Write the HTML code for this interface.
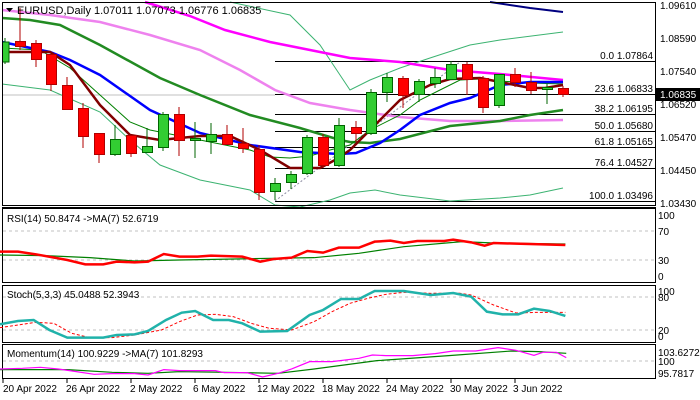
<!DOCTYPE html>
<html><head><meta charset="utf-8"><style>
html,body{margin:0;padding:0;background:#fff;width:700px;height:400px;overflow:hidden}
svg{display:block;font-family:"Liberation Sans",sans-serif;font-size:10px}
</style></head><body>
<svg width="700" height="400" viewBox="0 0 700 400" xmlns="http://www.w3.org/2000/svg">
<rect width="700" height="400" fill="#fff"/>
<!-- main panel -->
<line x1="2" y1="95" x2="275" y2="95" stroke="#c0c0c0" stroke-width="1"/>
<g stroke="#000" stroke-width="1">
<line x1="275" y1="61.5" x2="655" y2="61.5"/>
<line x1="275" y1="94.5" x2="655" y2="94.5"/>
<line x1="275" y1="114.5" x2="655" y2="114.5"/>
<line x1="275" y1="131.5" x2="655" y2="131.5"/>
<line x1="275" y1="147.5" x2="655" y2="147.5"/>
<line x1="275" y1="168.5" x2="655" y2="168.5"/>
<line x1="275" y1="201.5" x2="655" y2="201.5"/>
</g>
<g font-size="10" fill="#000" text-anchor="end">
<text x="653" y="59">0.0 1.07864</text>
<text x="653" y="92">23.6 1.06833</text>
<text x="653" y="112">38.2 1.06195</text>
<text x="653" y="129">50.0 1.05680</text>
<text x="653" y="145">61.8 1.05165</text>
<text x="653" y="166">76.4 1.04527</text>
<text x="653" y="199">100.0 1.03496</text>
</g>
<polyline fill="none" stroke="#8a8aa0" stroke-width="1" stroke-dasharray="2,2" points="275,201 460,62"/>
<!-- bollinger -->
<polyline fill="none" stroke="#3cb371" stroke-width="1" points="230,2 290,15 320,45 340,75 350,90 370,80 400,68 430,58 470,45 500,40 563,32"/>
<polyline fill="none" stroke="#3cb371" stroke-width="1" points="2,84 50,90 100,112 130,140 160,165 200,180 250,190 275,205 300,207 330,200 350,193 375,190 400,195 450,201 500,198 530,195 563,188"/>
<!-- MAs -->
<polyline fill="none" stroke="#000080" stroke-width="2" points="490,2 530,8 563,12"/>
<polyline fill="none" stroke="#ee82ee" stroke-width="2.5" points="2,10 50,15 100,22 150,35 200,50 240,70 275,90 310,103 350,110 400,117 450,121 500,121 563,120"/>
<polyline fill="none" stroke="#ff00ff" stroke-width="2.5" points="145,2 190,16 225,30 270,42 310,50 350,58 400,62 450,70 500,74 563,80"/>
<polyline fill="none" stroke="#228b22" stroke-width="2.5" points="2,18 30,20 60,25 100,45 160,78 200,95 250,115 300,128 340,140 350,142 370,143 400,139 450,126 500,121 530,115 563,110"/>
<polyline fill="none" stroke="#008000" stroke-width="1" points="2,48 40,50 70,68 100,95 130,122 150,130 200,140 250,150 270,157 290,158 310,156 330,150 350,145 370,130 400,115 420,100 440,90 460,80 480,79 500,81 530,83 563,84"/>
<polyline fill="none" stroke="#0000ff" stroke-width="2.5" points="2,42 50,52 70,60 100,75 150,110 200,133 250,145 300,152 340,154 356,153 380,143 400,130 420,115 450,103 470,98 500,85 530,82 563,82"/>
<polyline fill="none" stroke="#800000" stroke-width="2.5" points="2,52 50,52 70,65 100,105 130,135 160,140 200,136 230,136 260,150 290,168 320,168 335,160 350,150 380,120 400,100 430,85 450,79 480,78 500,82 530,88 545,88 563,85"/>
<!-- candles -->
<g stroke-width="1">
<g stroke="#006400" fill="#32cd32">
<line x1="5" y1="38" x2="5" y2="64"/><rect x="0" y="42" width="9" height="20"/>
<line x1="115" y1="125" x2="115" y2="156"/><rect x="110.5" y="139.5" width="10" height="15"/>
<line x1="147" y1="128" x2="147" y2="153"/><rect x="142.5" y="146.5" width="10" height="6"/>
<line x1="163" y1="112" x2="163" y2="151"/><rect x="158.5" y="114.5" width="10" height="33"/>
<line x1="195" y1="122" x2="195" y2="158"/><rect x="190.5" y="138.5" width="10" height="2"/>
<line x1="211" y1="123" x2="211" y2="154"/><rect x="206.5" y="134.5" width="10" height="7"/>
<line x1="275" y1="178" x2="275" y2="200"/><rect x="270.5" y="183.5" width="10" height="8"/>
<line x1="291" y1="171" x2="291" y2="189"/><rect x="286.5" y="174.5" width="10" height="8"/>
<line x1="307" y1="135" x2="307" y2="175"/><rect x="302.5" y="137.5" width="10" height="36"/>
<line x1="339" y1="118" x2="339" y2="167"/><rect x="334.5" y="125.5" width="10" height="40"/>
<line x1="371" y1="89" x2="371" y2="135"/><rect x="366.5" y="92.5" width="10" height="41"/>
<line x1="387" y1="73" x2="387" y2="102"/><rect x="382.5" y="77.5" width="10" height="15"/>
<line x1="419" y1="79" x2="419" y2="102"/><rect x="414.5" y="81.5" width="10" height="13"/>
<line x1="435" y1="68" x2="435" y2="88"/><rect x="430.5" y="77.5" width="10" height="6"/>
<line x1="451" y1="61" x2="451" y2="80"/><rect x="446.5" y="64.5" width="10" height="15"/>
<line x1="499" y1="74" x2="499" y2="108"/><rect x="494.5" y="74.5" width="10" height="31"/>
<line x1="547" y1="84" x2="547" y2="104"/><rect x="542.5" y="87.5" width="10" height="2"/>
</g>
<g stroke="#b00000" fill="#ff0000">
<line x1="20" y1="8" x2="20" y2="50"/><rect x="15.5" y="41.5" width="10" height="5"/>
<line x1="36" y1="40" x2="36" y2="67"/><rect x="31.5" y="43.5" width="10" height="16"/>
<line x1="51" y1="54" x2="51" y2="91"/><rect x="46.5" y="54.5" width="10" height="30"/>
<line x1="67" y1="77" x2="67" y2="109"/><rect x="62.5" y="85.5" width="10" height="24"/>
<line x1="83" y1="103" x2="83" y2="148"/><rect x="78.5" y="108.5" width="10" height="28"/>
<line x1="99" y1="133" x2="99" y2="163"/><rect x="94.5" y="133.5" width="10" height="21"/>
<line x1="131" y1="135" x2="131" y2="157"/><rect x="126.5" y="135.5" width="10" height="18"/>
<line x1="179" y1="107" x2="179" y2="156"/><rect x="174.5" y="114.5" width="10" height="26"/>
<line x1="227" y1="125" x2="227" y2="144"/><rect x="222.5" y="134.5" width="10" height="10"/>
<line x1="243" y1="128" x2="243" y2="153"/><rect x="238.5" y="143.5" width="10" height="5"/>
<line x1="259" y1="145" x2="259" y2="200"/><rect x="254.5" y="149.5" width="10" height="43"/>
<line x1="323" y1="134" x2="323" y2="168"/><rect x="318.5" y="137.5" width="10" height="28"/>
<line x1="356" y1="121" x2="356" y2="142"/><rect x="351.5" y="127.5" width="10" height="6"/>
<line x1="403" y1="76" x2="403" y2="108"/><rect x="398.5" y="78.5" width="10" height="17"/>
<line x1="467" y1="62" x2="467" y2="95"/><rect x="462.5" y="64.5" width="10" height="15"/>
<line x1="483" y1="76" x2="483" y2="113"/><rect x="478.5" y="78.5" width="10" height="29"/>
<line x1="515" y1="68" x2="515" y2="87"/><rect x="510.5" y="74.5" width="10" height="8"/>
<line x1="531" y1="72" x2="531" y2="94"/><rect x="526.5" y="82.5" width="10" height="8"/>
<line x1="563" y1="86" x2="563" y2="97"/><rect x="558.5" y="88.5" width="10" height="6"/>
</g>
</g>
<rect x="0" y="0" width="2" height="210" fill="#fff"/>
<rect x="2.5" y="2.5" width="653" height="203" fill="none" stroke="#000"/>
<line x1="2" y1="207.5" x2="656" y2="207.5" stroke="#000"/>
<path d="M6,8 L13,8 L9.5,12 Z" fill="#000"/>
<text x="17" y="14" font-size="11">EURUSD,Daily  1.07011 1.07073 1.06776 1.06835</text>
<g font-size="10" fill="#000">
<text x="660" y="9">1.09610</text>
<text x="660" y="42">1.08590</text>
<text x="660" y="75">1.07540</text>
<text x="660" y="108">1.06520</text>
<text x="660" y="141">1.05470</text>
<text x="660" y="174">1.04450</text>
<text x="660" y="207">1.03430</text>
</g>
<rect x="656" y="88" width="44" height="13" fill="#000"/>
<text x="660" y="98" fill="#fff" font-size="10">1.06835</text>

<!-- RSI -->
<rect x="2.5" y="208.5" width="653" height="74" fill="none" stroke="#000"/>
<g stroke="#c0c0c0" stroke-dasharray="3,3"><line x1="3" y1="231" x2="655" y2="231"/><line x1="3" y1="260" x2="655" y2="260"/></g>
<text x="7" y="222" font-size="10">RSI(14) 50.8474  -&gt;MA(7) 52.6719</text>
<g font-size="10"><text x="658" y="219">100</text><text x="658" y="235">70</text><text x="658" y="264">30</text><text x="658" y="280">0</text></g>
<g transform="translate(0,205) scale(0.4487,0.3333)">
<polyline fill="none" stroke="#008000" stroke-width="1.2" vector-effect="non-scaling-stroke" points="0,150 100,152 200,158 300,168 400,165 600,160 700,158 800,145 900,125 1030,110 1100,114 1260,117"/>
<polyline fill="none" stroke="#ff0000" stroke-width="2.5" vector-effect="non-scaling-stroke" points="0,140 40,140 80,148 150,165 190,178 230,178 260,170 300,172 330,170 365,147 400,155 440,155 470,152 540,155 580,170 610,162 650,158 685,138 720,143 755,128 800,128 835,110 870,107 900,114 930,108 990,108 1010,104 1050,112 1080,122 1100,114 1150,116 1260,120"/>
</g>

<!-- Stoch -->
<rect x="2.5" y="285.5" width="653" height="57" fill="none" stroke="#000"/>
<g stroke="#c0c0c0" stroke-dasharray="3,3"><line x1="3" y1="297" x2="655" y2="297"/><line x1="3" y1="330" x2="655" y2="330"/></g>
<text x="7" y="298" font-size="10">Stoch(5,3,3) 45.0488 52.3943</text>
<g font-size="10"><text x="658" y="295">100</text><text x="658" y="301">80</text><text x="658" y="334">20</text><text x="658" y="340">0</text></g>
<g transform="translate(0,205) scale(0.4487,0.3333)">
<polyline fill="none" stroke="#ff0000" stroke-width="1" stroke-dasharray="3,2" vector-effect="non-scaling-stroke" points="0,368 80,352 120,355 160,385 200,398 250,398 300,390 360,375 400,350 440,330 480,328 520,335 560,355 600,370 650,375 700,350 740,320 780,295 820,280 860,268 900,262 960,265 1020,264 1050,270 1100,300 1150,324 1200,322 1260,322"/>
<polyline fill="none" stroke="#20b2aa" stroke-width="2.5" vector-effect="non-scaling-stroke" points="0,358 40,348 75,345 110,375 150,398 230,398 260,390 300,388 330,378 370,345 405,323 435,318 475,345 510,345 540,355 580,380 640,378 690,330 720,315 760,282 800,282 835,258 900,258 960,270 1010,264 1050,275 1085,320 1120,328 1155,328 1190,311 1225,318 1260,333"/>
</g>

<!-- Momentum -->
<rect x="2.5" y="344.5" width="653" height="34" fill="none" stroke="#000"/>
<line x1="3" y1="361" x2="655" y2="361" stroke="#c0c0c0" stroke-dasharray="3,3"/>
<text x="7" y="357" font-size="10">Momentum(14) 100.9229  -&gt;MA(7) 101.8293</text>
<g font-size="10"><text x="658" y="356">103.6272</text><text x="658" y="365">100</text><text x="658" y="377">95.7817</text></g>
<g transform="translate(0,205) scale(0.4487,0.3333)">
<polyline fill="none" stroke="#008000" stroke-width="1.2" vector-effect="non-scaling-stroke" points="0,494 150,494 250,502 330,505 400,500 500,502 620,505 700,492 840,467 1000,452 1140,438 1200,440 1262,445"/>
<polyline fill="none" stroke="#ff00ff" stroke-width="1.2" vector-effect="non-scaling-stroke" points="0,492 50,490 90,487 130,492 170,500 210,508 250,506 300,506 330,510 365,494 400,497 480,497 500,503 550,503 585,516 620,505 650,492 690,470 740,470 800,460 830,450 860,452 920,452 970,446 1010,438 1060,438 1110,428 1150,436 1190,451 1210,442 1240,442 1262,458"/>
</g>
<!-- date axis -->
<g stroke="#000"><line x1="3" y1="379" x2="3" y2="383"/><line x1="67" y1="379" x2="67" y2="383"/><line x1="131" y1="379" x2="131" y2="383"/><line x1="195" y1="379" x2="195" y2="383"/><line x1="259" y1="379" x2="259" y2="383"/><line x1="323" y1="379" x2="323" y2="383"/><line x1="387" y1="379" x2="387" y2="383"/><line x1="451" y1="379" x2="451" y2="383"/><line x1="515" y1="379" x2="515" y2="383"/></g>
<g font-size="10">
<text x="3" y="392">20 Apr 2022</text>
<text x="66" y="392">26 Apr 2022</text>
<text x="130" y="392">2 May 2022</text>
<text x="193" y="392">6 May 2022</text>
<text x="257" y="392">12 May 2022</text>
<text x="322" y="392">18 May 2022</text>
<text x="386" y="392">24 May 2022</text>
<text x="450" y="392">30 May 2022</text>
<text x="513" y="392">3 Jun 2022</text>
</g>
</svg>
</body></html>
